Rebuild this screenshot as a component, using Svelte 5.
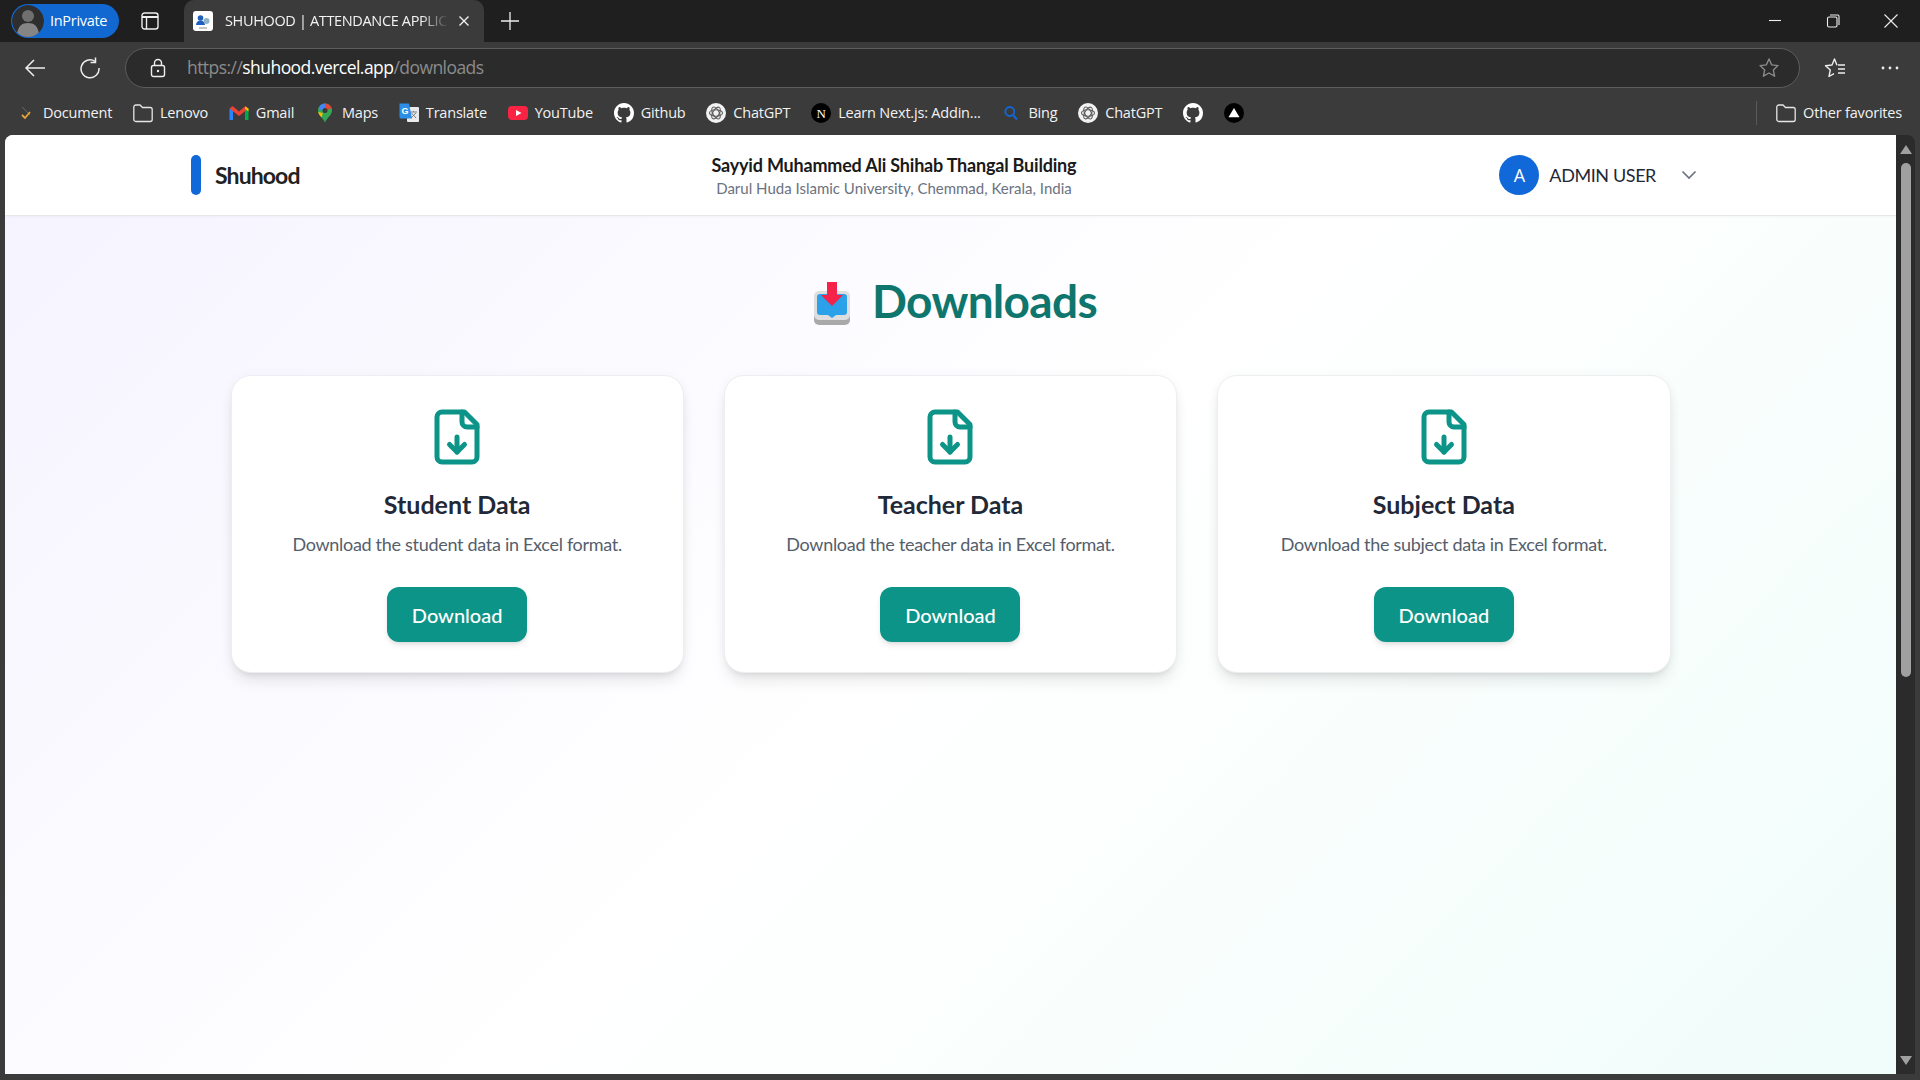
<script lang="ts">
	const bookmarks = [
		{ icon: 'doc', label: 'Document' },
		{ icon: 'folder', label: 'Lenovo' },
		{ icon: 'gmail', label: 'Gmail' },
		{ icon: 'maps', label: 'Maps' },
		{ icon: 'translate', label: 'Translate' },
		{ icon: 'youtube', label: 'YouTube' },
		{ icon: 'github', label: 'Github' },
		{ icon: 'chatgpt', label: 'ChatGPT' },
		{ icon: 'next', label: 'Learn Next.js: Addin...' },
		{ icon: 'bing', label: 'Bing' },
		{ icon: 'chatgpt', label: 'ChatGPT' },
		{ icon: 'github', label: '' },
		{ icon: 'triangle', label: '' }
	];

	const cards = [
		{ title: 'Student Data', text: 'Download the student data in Excel format.' },
		{ title: 'Teacher Data', text: 'Download the teacher data in Excel format.' },
		{ title: 'Subject Data', text: 'Download the subject data in Excel format.' }
	];
</script>

{#snippet favicon(name: string)}
	<svg class="fav" viewBox="0 0 20 20" width="20" height="20" aria-hidden="true">
		{#if name === 'doc'}
			<path d="M6 4l8 8" stroke="#666" stroke-width="1" fill="none" />
			<path d="M6 12l3 3 5-6" stroke="#e8a33a" stroke-width="1.8" fill="none" />
		{:else if name === 'folder'}
			<path d="M0.8 4a2 2 0 0 1 2-2h4.200l2.500 2.500h7.700a2 2 0 0 1 2 2v10a2 2 0 0 1-2 2h-14.400a2 2 0 0 1-2-2z" fill="none" stroke="#e6e6e6" stroke-width="1.3" />
		{:else if name === 'gmail'}
			<path d="M0.5 17V6l3.500-2v13z" fill="#2684fc" />
			<path d="M16 17V4l3.500 2v11z" fill="#00ac47" />
			<path d="M0.500 5.500L3.500 3l6.500 5.500L16.500 3l3 2.500L10 13z" fill="#ea4335" />
			<path d="M16 3.500l3.500 2v3l-3.500-2.500z" fill="#ffba00" />
		{:else if name === 'maps'}
			<path d="M10 0.500a7 7 0 0 0-7 7c0 4.500 4.500 6.500 7 12 2.500-5.500 7-7.500 7-12a7 7 0 0 0-7-7z" fill="#34a853" />
			<path d="M5 2.500A7 7 0 0 1 10 0.500v5L5 7.500z" fill="#4285f4" />
			<path d="M10 0.500a7 7 0 0 1 6.500 4.500L11 7.500z" fill="#ea4335" />
			<path d="M3.200 9l4.500 1-1 4.500C5 13 3.600 11 3.200 9z" fill="#fbbc04" />
			<circle cx="10" cy="7.500" r="2.500" fill="#3a3a3a" />
		{:else if name === 'translate'}
			<rect x="8" y="4" width="12" height="15" rx="1" fill="#e8eaed" />
			<path d="M11 9h7M14.500 8v1M12 15l5-5M12.500 10l4.500 5" stroke="#777" stroke-width="0.9" fill="none" />
			<path d="M0.500 0.500h9.500l3 15H2a1.500 1.500 0 0 1-1.500-1.500z" fill="#2b8fe8" />
			<text x="6" y="11" class="fav-letter" fill="#fff" font-size="9">G</text>
		{:else if name === 'youtube'}
			<rect x="0" y="3" width="20" height="14" rx="4" fill="#fb2343" />
			<path d="M8 7l5.500 3L8 13z" fill="#fff" />
		{:else if name === 'github'}
			<g transform="scale(1.25)">
				<path fill="#fff" d="M8 0C3.58 0 0 3.58 0 8c0 3.54 2.29 6.53 5.47 7.59.4.07.55-.17.55-.38 0-.19-.01-.82-.01-1.49-2.01.37-2.53-.49-2.69-.94-.09-.23-.48-.94-.82-1.13-.28-.15-.68-.52-.01-.53.63-.01 1.08.58 1.23.82.72 1.21 1.87.87 2.33.66.07-.52.28-.87.51-1.07-1.78-.2-3.64-.89-3.64-3.95 0-.87.31-1.59.82-2.15-.08-.2-.36-1.02.08-2.12 0 0 .67-.21 2.2.82.64-.18 1.32-.27 2-.27.68 0 1.36.09 2 .27 1.53-1.04 2.2-.82 2.2-.82.44 1.1.16 1.92.08 2.12.51.56.82 1.27.82 2.15 0 3.07-1.87 3.75-3.65 3.95.29.25.54.73.54 1.48 0 1.07-.01 1.93-.01 2.2 0 .21.15.46.55.38A8.013 8.013 0 0016 8c0-4.42-3.58-8-8-8z" />
			</g>
		{:else if name === 'chatgpt'}
			<circle cx="10" cy="10" r="10" fill="#f2f2f2" />
			<g fill="none" stroke="#5a5a5a" stroke-width="1.1">
				<ellipse cx="10" cy="10" rx="6.5" ry="3.2" />
				<ellipse cx="10" cy="10" rx="6.5" ry="3.2" transform="rotate(60 10 10)" />
				<ellipse cx="10" cy="10" rx="6.5" ry="3.2" transform="rotate(120 10 10)" />
			</g>
		{:else if name === 'next'}
			<circle cx="10" cy="10" r="10" fill="#000" />
			<text x="10" y="14.5" class="fav-letter thin" fill="#fff" font-size="13">N</text>
		{:else if name === 'bing'}
			<circle cx="8.8" cy="8.5" r="4.5" fill="none" stroke="#1168d8" stroke-width="1.8" />
			<path d="M12 12l4 4.5" stroke="#1168d8" stroke-width="2" />
		{:else if name === 'triangle'}
			<circle cx="10" cy="10" r="10" fill="#000" />
			<path d="M10 5l5.500 9.200h-11z" fill="#fff" />
		{/if}
	</svg>
{/snippet}

<div class="browser">
	<div class="tabstrip">
		<div class="inprivate">
			<span class="avatar">
				<svg viewBox="0 0 32 32" width="32" height="32" aria-hidden="true">
					<circle cx="16" cy="16" r="16" fill="#2e2e2e" />
					<circle cx="16" cy="11" r="6" fill="#6f6f6f" />
					<path d="M5 29c1-8 5-11 11-11s10 3 11 11a16 16 0 0 1-22 0z" fill="#858585" />
				</svg>
			</span>
			<span class="pill-label">InPrivate</span>
		</div>
		<svg class="tabs-btn" viewBox="0 0 18 18" width="18" height="18" aria-hidden="true">
			<rect x="1" y="1" width="16" height="16" rx="2.5" fill="none" stroke="#eee" stroke-width="1.4" />
			<path d="M1 5h16" stroke="#eee" stroke-width="2" />
			<path d="M5.500 5v12" stroke="#eee" stroke-width="1.4" />
		</svg>
		<div class="tab">
			<svg class="tab-fav" viewBox="0 0 20 20" width="20" height="20" aria-hidden="true">
				<rect width="20" height="20" rx="3" fill="#fff" />
				<circle cx="7.5" cy="7" r="2.8" fill="#1f5fbf" />
				<path d="M3 14c0-3 2-4.500 4.500-4.500S12 11 12 14z" fill="#1f5fbf" />
				<circle cx="13.5" cy="10" r="3" fill="#8fb3c9" />
				<path d="M6 17h8" stroke="#888" stroke-width="1" />
			</svg>
			<span class="tab-title">SHUHOOD | ATTENDANCE APPLICATION</span>
			<svg viewBox="0 0 12 12" width="12" height="12" aria-hidden="true">
				<path d="M1.500 1.500l9 9M10.500 1.500l-9 9" stroke="#eee" stroke-width="1.4" />
			</svg>
		</div>
		<svg class="new-tab" viewBox="0 0 18 18" width="18" height="18" aria-hidden="true">
			<path d="M9 0v18M0 9h18" stroke="#eee" stroke-width="1.3" />
		</svg>
		<div class="window-controls">
			<span class="ctl">
				<svg viewBox="0 0 14 14" width="14" height="14" aria-hidden="true"><path d="M1 6.500h12" stroke="#eee" stroke-width="1.1" /></svg>
			</span>
			<span class="ctl">
				<svg viewBox="0 0 14 14" width="14" height="14" aria-hidden="true">
					<rect x="1.5" y="3" width="9.500" height="10" rx="1.5" fill="none" stroke="#eee" stroke-width="1.1" />
					<path d="M4 1h8a1.500 1.500 0 0 1 1 1.500V11" fill="none" stroke="#eee" stroke-width="1.1" />
				</svg>
			</span>
			<span class="ctl">
				<svg viewBox="0 0 14 14" width="14" height="14" aria-hidden="true"><path d="M0.500 0.500l13 13M13.500 0.500l-13 13" stroke="#eee" stroke-width="1.1" /></svg>
			</span>
		</div>
	</div>

	<div class="toolbar">
		<svg class="tb-back" viewBox="0 0 22 22" width="22" height="22" aria-hidden="true">
			<path d="M21 11H2M10 3l-8 8 8 8" fill="none" stroke="#eee" stroke-width="1.5" />
		</svg>
		<svg class="tb-reload" viewBox="0 0 22 22" width="22" height="22" aria-hidden="true">
			<path d="M16 4.300A9 9 0 1 0 20 11" fill="none" stroke="#eee" stroke-width="1.5" />
			<path d="M16.500 0.500v5h-5" fill="none" stroke="#eee" stroke-width="1.5" />
		</svg>
		<div class="address">
			<svg class="lock" viewBox="0 0 16 20" width="16" height="20" aria-hidden="true">
				<rect x="1.5" y="7.5" width="13" height="11" rx="2" fill="none" stroke="#eee" stroke-width="1.4" />
				<path d="M4.500 7.500V5a3.500 3.500 0 0 1 7 0v2.500" fill="none" stroke="#eee" stroke-width="1.4" />
				<circle cx="8" cy="13" r="1.2" fill="#eee" />
			</svg>
			<span class="url"><span class="dim">https://</span><span class="host">shuhood.vercel.app</span><span class="dim">/downloads</span></span>
			<svg class="addr-star" viewBox="0 0 22 22" width="22" height="22" aria-hidden="true">
				<path d="M11 2l2.700 5.900 6.300.7-4.700 4.300 1.300 6.300-5.600-3.200-5.600 3.200 1.300-6.300L2 8.600l6.300-.7z" fill="none" stroke="#8a8a8a" stroke-width="1.4" stroke-linejoin="round" />
			</svg>
		</div>
		<svg class="tb-favs" viewBox="0 0 22 22" width="22" height="22" aria-hidden="true">
			<path d="M13 8.300L10.500 2 8 8l-6.500.7 4.800 4.300-1.300 6.500 5-2.800" fill="none" stroke="#eee" stroke-width="1.4" stroke-linejoin="round" />
			<path d="M14 8h7M14 12h7M14 16h7" stroke="#eee" stroke-width="1.3" />
		</svg>
		<svg class="tb-more" viewBox="0 0 18 4" width="18" height="4" aria-hidden="true">
			<circle cx="2" cy="2" r="1.4" fill="#eee" /><circle cx="9" cy="2" r="1.4" fill="#eee" /><circle cx="16" cy="2" r="1.4" fill="#eee" />
		</svg>
	</div>

	<div class="bookmarks">
		{#each bookmarks as b}
			<div class="bookmark">
				{@render favicon(b.icon)}
				{#if b.label}<span>{b.label}</span>{/if}
			</div>
		{/each}
		<div class="other">
			{@render favicon('folder')}
			<span>Other favorites</span>
		</div>
	</div>

	<div class="viewport">
		<div class="page">
			<header class="site-header">
				<div class="brand">
					<span class="brand-bar"></span>
					<span class="brand-name">Shuhood</span>
				</div>
				<div class="place">
					<div class="place-name">Sayyid Muhammed Ali Shihab Thangal Building</div>
					<div class="place-sub">Darul Huda Islamic University, Chemmad, Kerala, India</div>
				</div>
				<div class="user">
					<span class="user-avatar">A</span>
					<span class="user-name">ADMIN USER</span>
					<svg viewBox="0 0 16 10" width="16" height="10" aria-hidden="true">
						<path d="M1.500 1.500L8 8l6.500-6.500" fill="none" stroke="#6b7280" stroke-width="1.7" />
					</svg>
				</div>
			</header>

			<main class="content">
				<h1 class="page-title">
					<svg viewBox="0 0 36 43" width="36" height="43" aria-hidden="true">
						<path d="M0 24h36v14a5 5 0 0 1-5 5H5a5 5 0 0 1-5-5z" fill="#a9a9a9" />
						<rect x="0" y="9" width="36" height="29" rx="5" fill="#dedede" />
						<path d="M3 15a3 3 0 0 1 3-3h24a3 3 0 0 1 3 3v15a3 3 0 0 1-3 3h-8l-4 3-4-3H6a3 3 0 0 1-3-3z" fill="#2aa1e8" />
						<path d="M13 0h10v13h6L18 24 7 13h6z" fill="#f5234a" />
					</svg>
					<span>Downloads</span>
				</h1>

				<div class="cards">
					{#each cards as card}
						<section class="card">
							<svg class="file-icon" viewBox="0 0 24 24" width="60" height="60" fill="none" stroke="currentColor" stroke-width="2" stroke-linecap="round" stroke-linejoin="round" aria-hidden="true">
								<path d="M15 2H6a2 2 0 0 0-2 2v16a2 2 0 0 0 2 2h12a2 2 0 0 0 2-2V7Z" />
								<path d="M14 2v4a2 2 0 0 0 2 2h4" />
								<path d="M12 18v-6" />
								<path d="m9 15 3 3 3-3" />
							</svg>
							<h2>{card.title}</h2>
							<p>{card.text}</p>
							<button type="button">Download</button>
						</section>
					{/each}
				</div>
			</main>
		</div>

		<div class="scrollbar">
			<span class="arrow up"></span>
			<span class="thumb"></span>
			<span class="arrow down"></span>
		</div>
	</div>
</div>

<style>
	:global(body) {
		margin: 0;
		background: #3b3b3b;
	}

	.browser {
		display: flex;
		flex-direction: column;
		width: 1920px;
		height: 1080px;
		overflow: hidden;
		background: #3b3b3b;
		font-family: 'Open Sans', 'Noto Sans', sans-serif;
		color: #f2f2f2;
	}

	.tabstrip {
		display: flex;
		align-items: center;
		height: 42px;
		padding-left: 11px;
		background: #1f1f1f;
		flex: none;
	}

	.inprivate {
		display: flex;
		align-items: center;
		gap: 6px;
		width: 108px;
		height: 34px;
		box-sizing: border-box;
		padding-left: 1px;
		border-radius: 17px;
		background: #1068d0;
		font-size: 14.5px;
		letter-spacing: -0.3px;
		color: #fff;
	}

	.pill-label {
		margin-bottom: 1px;
	}

	.avatar {
		display: flex;
		border-radius: 50%;
		overflow: hidden;
	}

	.tabs-btn {
		margin-left: 22px;
	}

	.tab {
		display: flex;
		align-items: center;
		width: 300px;
		height: 42px;
		box-sizing: border-box;
		margin-left: 25px;
		padding: 0 14px 0 9px;
		border-radius: 10px 10px 0 0;
		background: #3b3b3b;
		font-size: 14.5px;
	}

	.tab-title {
		flex: 1;
		margin: 0 10px 2px 12px;
		overflow: hidden;
		white-space: nowrap;
		letter-spacing: -0.35px;
		-webkit-mask-image: linear-gradient(90deg, #000 88%, transparent);
		mask-image: linear-gradient(90deg, #000 88%, transparent);
	}

	.new-tab {
		margin-left: 17px;
	}

	.window-controls {
		display: flex;
		margin-left: auto;
	}

	.ctl {
		display: flex;
		align-items: center;
		justify-content: center;
		width: 58px;
		height: 42px;
	}

	.toolbar {
		display: flex;
		align-items: center;
		height: 52px;
		padding: 6px 0;
		box-sizing: border-box;
		flex: none;
	}

	.tb-back {
		margin-left: 24px;
	}

	.tb-reload {
		margin-left: 33px;
	}

	.address {
		display: flex;
		align-items: center;
		width: 1675px;
		height: 40px;
		box-sizing: border-box;
		margin-left: 24px;
		padding: 0 14px 0 24px;
		border: 1px solid #5c5c5c;
		border-radius: 20px;
		background: #2b2b2b;
		font-size: 17.5px;
	}

	.url {
		margin: 0 0 2px 21px;
		letter-spacing: -0.55px;
		white-space: nowrap;
	}

	.dim {
		color: #8c8c8c;
	}

	.host {
		color: #fff;
	}

	.addr-star {
		margin-left: auto;
		margin-right: 5px;
	}

	.tb-favs {
		margin-left: 24px;
	}

	.tb-more {
		margin-left: 35px;
	}

	.bookmarks {
		display: flex;
		align-items: center;
		gap: 20.8px;
		height: 41px;
		padding: 0 18px 4px 16px;
		flex: none;
		font-size: 14.5px;
		letter-spacing: -0.2px;
		box-sizing: border-box;
	}

	.bookmark,
	.other {
		display: flex;
		align-items: center;
		gap: 7px;
		white-space: nowrap;
	}

	.other {
		margin-left: auto;
		padding-left: 19px;
		border-left: 1px solid #5a5a5a;
		height: 24px;
	}

	.fav {
		display: block;
		flex: none;
	}

	.fav-letter {
		font-family: 'Liberation Sans', sans-serif;
		font-weight: 700;
		text-anchor: middle;
	}

	.fav-letter.thin {
		font-family: 'Liberation Serif', serif;
		font-weight: 400;
	}

	.viewport {
		display: flex;
		flex: 1;
		min-height: 0;
		margin: 0 5px 6px 5px;
		border-radius: 8px 8px 0 0;
		overflow: hidden;
	}

	.page {
		flex: 1;
		min-width: 0;
		background: linear-gradient(135deg, #f5f3ff 0%, #fff 50%, #f0fdfa 100%);
		font-family: Lato, 'Open Sans', sans-serif;
		color: #1f2937;
	}

	.site-header {
		display: flex;
		align-items: center;
		justify-content: space-between;
		height: 81px;
		box-sizing: border-box;
		padding: 0 199px 0 186px;
		background: #fff;
		border-bottom: 1px solid #e5e7eb;
		box-shadow: 0 1px 3px rgba(0, 0, 0, 0.04);
	}

	.brand {
		display: flex;
		align-items: center;
		gap: 15px;
	}

	.brand-bar {
		width: 10px;
		height: 40px;
		border-radius: 5px;
		background: #1168d8;
	}

	.brand-name {
		margin-left: -1px;
		font-size: 23px;
		font-weight: 700;
		letter-spacing: -0.9px;
		color: #222;
	}

	.place {
		margin-right: 11px;
		text-align: center;
	}

	.place-name {
		font-size: 18px;
		font-weight: 700;
		line-height: 26px;
		letter-spacing: -0.2px;
		color: #1a1a1a;
	}

	.place-sub {
		font-size: 15px;
		line-height: 20px;
		color: #6b7280;
	}

	.user {
		display: flex;
		align-items: center;
		font-size: 18px;
		color: #1f2937;
	}

	.user-avatar {
		display: flex;
		align-items: center;
		justify-content: center;
		width: 40px;
		height: 40px;
		margin-right: 10px;
		border-radius: 50%;
		background: #1168d8;
		font-family: 'Open Sans', sans-serif;
		font-size: 18px;
		color: #fff;
	}

	.user-name {
		margin-right: 25px;
		letter-spacing: -0.4px;
	}

	.content {
		padding: 61px 225.5px 0;
	}

	.page-title {
		display: flex;
		align-items: center;
		justify-content: center;
		gap: 22px;
		margin: 0 0 51px;
		padding-left: 10px;
		font-size: 46px;
		line-height: 47px;
		font-weight: 700;
		letter-spacing: -0.7px;
		color: #0f766e;
	}

	.page-title svg {
		position: relative;
		top: 3px;
	}

	.cards {
		display: grid;
		grid-template-columns: repeat(3, 1fr);
		gap: 40px;
	}

	.card {
		display: flex;
		flex-direction: column;
		align-items: center;
		padding: 31px 24px 30px;
		border: 1px solid #eceef2;
		border-radius: 20px;
		background: #fff;
		box-shadow:
			0 10px 15px -3px rgba(0, 0, 0, 0.1),
			0 4px 6px -4px rgba(0, 0, 0, 0.1),
			0 0 12px rgba(0, 0, 0, 0.03);
	}

	.file-icon {
		display: block;
		color: #0d9488;
	}

	.card h2 {
		margin: 21px 0 0;
		font-size: 25px;
		line-height: 32px;
		font-weight: 700;
		color: #1f2937;
	}

	.card p {
		margin: 10px 0 0;
		font-size: 18px;
		line-height: 28px;
		letter-spacing: -0.3px;
		color: #555e6c;
	}

	.card button {
		width: 140px;
		height: 55px;
		margin-top: 29px;
		border: 0;
		border-radius: 12px;
		background: #0d9488;
		font-family: inherit;
		font-size: 20px;
		font-weight: 500;
		color: #fff;
		box-shadow:
			0 4px 6px -1px rgba(0, 0, 0, 0.1),
			0 2px 4px -2px rgba(0, 0, 0, 0.1);
	}

	.scrollbar {
		display: flex;
		flex-direction: column;
		align-items: center;
		width: 19px;
		flex: none;
		background: #2b2b2b;
	}

	.arrow {
		width: 0;
		height: 0;
		border-left: 6px solid transparent;
		border-right: 6px solid transparent;
	}

	.arrow.up {
		margin-top: 10px;
		border-bottom: 9px solid #a0a0a0;
	}

	.arrow.down {
		margin-top: auto;
		margin-bottom: 9px;
		border-top: 9px solid #a0a0a0;
	}

	.thumb {
		width: 10px;
		height: 514px;
		margin-top: 9px;
		border-radius: 5px;
		background: #a0a0a0;
	}
</style>
